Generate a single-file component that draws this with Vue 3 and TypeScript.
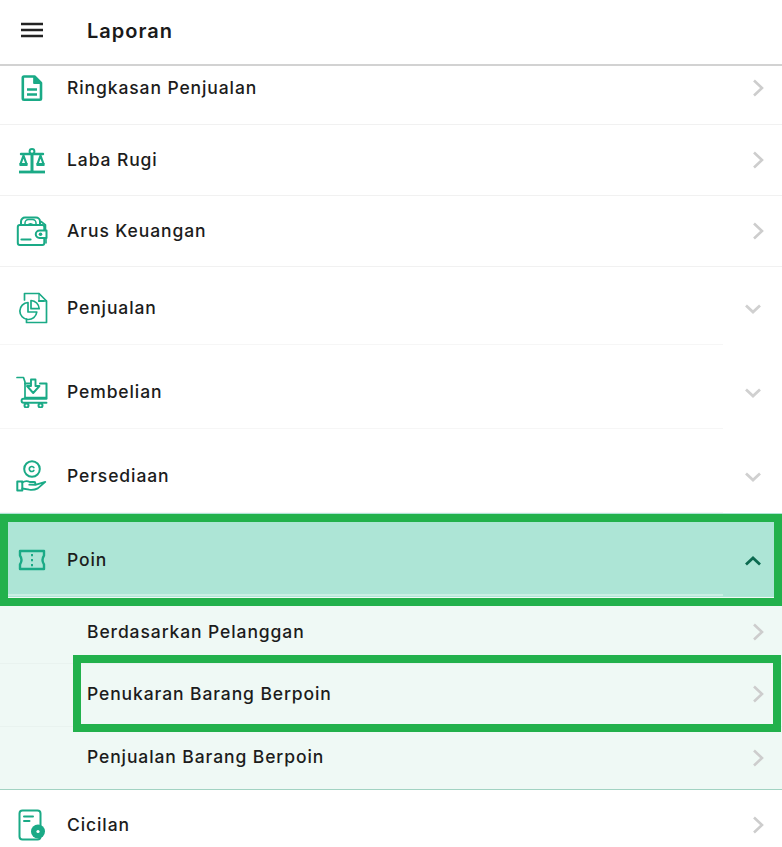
<script setup lang="ts">
type Kind = 'right' | 'down' | 'up'
interface Row { label: string; icon: string; kind: Kind; cls: string }

const topRows: Row[] = [
  { label: 'Ringkasan Penjualan', icon: 'doc', kind: 'right', cls: 'r1' },
  { label: 'Laba Rugi', icon: 'scale', kind: 'right', cls: 'r2' },
  { label: 'Arus Keuangan', icon: 'wallet', kind: 'right', cls: 'r2' },
  { label: 'Penjualan', icon: 'pie', kind: 'down', cls: 'r3' },
  { label: 'Pembelian', icon: 'cart', kind: 'down', cls: 'r4' },
  { label: 'Persediaan', icon: 'hand', kind: 'down', cls: 'r4' }
]
const subRows = [
  { label: 'Berdasarkan Pelanggan', cls: 's1', mark: false },
  { label: 'Penukaran Barang Berpoin', cls: 's2', mark: true },
  { label: 'Penjualan Barang Berpoin', cls: 's3', mark: false }
]
</script>

<template>
  <div class="page">
    <header class="bar">
      <svg class="menu" width="24" height="16" viewBox="0 0 24 16"><path d="M1 2h22M1 8h22M1 14h22" stroke="#222" stroke-width="2.4" fill="none" /></svg>
      <h1 class="title">Laporan</h1>
    </header>

    <div v-for="row in topRows" :key="row.label" class="row" :class="row.cls">
      <svg class="icon" width="32" height="32" viewBox="0 0 32 32" fill="none" stroke="#1aaa86" stroke-width="1.7" stroke-linejoin="round" stroke-linecap="round">
        <template v-if="row.icon === 'doc'">
          <path d="M8 4.500h10.500l6.500 6.500v15.500a1.200 1.200 0 0 1-1.200 1.200H8a1.200 1.200 0 0 1-1.200-1.200V5.700A1.200 1.200 0 0 1 8 4.500z" stroke-width="2.600" />
          <path d="M18 4.500l7 7h-7z" fill="#1aaa86" stroke-width="1" />
          <path d="M11 17.500h10M11 22.500h10" stroke-width="2.400" stroke-linecap="butt" />
        </template>
        <template v-else-if="row.icon === 'scale'">
          <path d="M3 28h26" stroke-width="2.800" stroke-linecap="butt" />
          <path d="M16 10v18" stroke-width="3" stroke-linecap="butt" />
          <circle cx="16" cy="7.500" r="2.400" stroke-width="2" />
          <path d="M5 10h22" stroke-width="2.400" />
          <path d="M7.500 11.500L4.500 20h6zM24.500 11.500L21.500 20h6z" stroke-width="2.200" />
          <path d="M3.500 20.500h8M20.500 20.500h8" stroke-width="3" stroke-linecap="butt" />
        </template>
        <template v-else-if="row.icon === 'wallet'">
          <rect x="1.800" y="10" width="26.500" height="20" rx="2" stroke-width="2" />
          <path d="M5 10V6.500a4 4 0 0 1 4-4h11a4 4 0 0 1 4 4V10" stroke-width="2" />
          <path d="M9 10V8a3.500 3.500 0 0 1 3.500-3.500h4A3.500 3.500 0 0 1 20 8v2M12 10a3 3 0 0 1 5 0" stroke-width="1.500" />
          <path d="M25 6.500l4.500 3.500v5M30 23v5" stroke-width="1.600" />
          <path d="M30.500 15.500h-7a3.500 3.500 0 0 0 0 7.500h7z" fill="#fff" stroke-width="2" />
          <circle cx="24.500" cy="19.200" r="1.800" fill="#1aaa86" stroke="none" />
          <path d="M5.500 24.500h9" stroke-width="2.200" />
        </template>
        <template v-else-if="row.icon === 'pie'">
          <path d="M8.500 8V1.500H23l7.500 7.500v21.500H10.500V27" stroke-width="1.700" />
          <path d="M23 1.500V9h7.500" stroke-width="1.300" />
          <path d="M23 9h4.500" stroke-width="2.200" />
          <path d="M15 8.500v8.200h8.200a8.600 8.600 0 0 0-8.200-8.200z" stroke-width="1.700" />
          <path d="M12 10.500a8.500 8.500 0 1 0 8.800 9.500h-8.800z" stroke-width="1.700" />
        </template>
        <template v-else-if="row.icon === 'cart'">
          <path d="M1 1.500h6.500L9 6v15" stroke-width="1.700" />
          <path d="M9 7.500h5M24 7.500h6.500V22" stroke-width="2" />
          <path d="M15 3.500h4.500v6.500h4L17.200 17l-6.200-7h4z" stroke-width="1.900" />
          <path d="M9 21.500h21" stroke-width="1.700" />
          <path d="M30.500 22.800H7.500a1.700 1.700 0 0 0 0 3.900h23" stroke-width="1.900" />
          <circle cx="10.500" cy="29.500" r="2" stroke-width="2" />
          <circle cx="24.500" cy="29.500" r="2" stroke-width="2" />
        </template>
        <template v-else-if="row.icon === 'hand'">
          <circle cx="16" cy="9" r="7.800" stroke-width="2" />
          <path d="M17.800 7.500a2.500 2.500 0 1 0 0 3" stroke-width="1.700" />
          <path d="M1.300 21.500h5v9h-5z" stroke-width="2" />
          <path d="M6.300 22.500c3-2 5-2 7.500-.5h4.500c1.500 0 1.500 2.700 0 2.700h-5l6 .2 10-3-7.500 6.500c-3 1.500-5 1.800-8.500 1.300l-7-1.200" stroke-width="1.800" />
        </template>
      </svg>
      <span class="label">{{ row.label }}</span>
      <svg v-if="row.kind === 'right'" class="chev-r" width="12" height="18" viewBox="0 0 12 18"><path d="M2 1.500L10 9l-8 7.500" fill="none" stroke="#cdcdcd" stroke-width="2.600" /></svg>
      <svg v-else class="chev-d" width="18" height="12" viewBox="0 0 18 12"><path d="M2 2.500l7 6.500 7-6.500" fill="none" stroke="#d0d0d0" stroke-width="2.800" /></svg>
    </div>

    <div class="row r4 poin">
      <svg class="icon" width="32" height="32" viewBox="0 0 32 32" fill="none" stroke="#1aaa86" stroke-width="2.400" stroke-linejoin="round">
        <path d="M4 7H28V11.500Q25 16 28 20.500V25H4V20.500Q7 16 4 11.500Z" />
        <path d="M16 10v2.200M16 15v2.200M16 20v2.200" stroke-width="2" />
      </svg>
      <span class="label">Poin</span>
      <svg class="chev-d" width="18" height="12" viewBox="0 0 18 12"><path d="M2 9.500L9 3l7 6.500" fill="none" stroke="#0c6a50" stroke-width="2.800" /></svg>
      <i class="mark mark-poin"></i>
    </div>

    <div class="sub">
      <div v-for="item in subRows" :key="item.label" class="sub-row" :class="item.cls">
        <span class="label">{{ item.label }}</span>
        <svg class="chev-r" width="12" height="18" viewBox="0 0 12 18"><path d="M2 1.500L10 9l-8 7.500" fill="none" stroke="#cdcdcd" stroke-width="2.600" /></svg>
        <i v-if="item.mark" class="mark mark-sub"></i>
      </div>
    </div>

    <div class="row r2 last">
      <svg class="icon" width="32" height="32" viewBox="0 0 32 32" fill="none" stroke="#1aaa86" stroke-width="2" stroke-linecap="round">
        <rect x="3.500" y="1.500" width="21" height="29" rx="3" />
        <path d="M8 7.500h9M8 12h5.500" stroke-width="2" />
        <circle cx="22" cy="22.500" r="7" fill="#1aaa86" stroke="none" />
        <circle cx="22" cy="22.500" r="1.600" fill="#fff" stroke="none" />
      </svg>
      <span class="label">Cicilan</span>
      <svg class="chev-r" width="12" height="18" viewBox="0 0 12 18"><path d="M2 1.500L10 9l-8 7.500" fill="none" stroke="#cdcdcd" stroke-width="2.600" /></svg>
    </div>
  </div>
</template>

<style scoped>
.page {
  width: 782px;
  height: 847px;
  overflow: hidden;
  background: #fff;
  font-family: Inter, "Noto Sans", sans-serif;
  color: #1c1c1c;
}
.bar {
  height: 66px;
  box-sizing: border-box;
  border-bottom: 2px solid #d2d2d2;
  display: flex;
  align-items: center;
  padding-left: 20px;
  padding-bottom: 4px;
}
.menu { flex: none; }
.title {
  margin: 2px 0 0 43px;
  font-size: 20px;
  font-weight: 600;
  letter-spacing: 1px;
  color: #1a1a1a;
}
.row {
  position: relative;
  display: flex;
  align-items: center;
  box-sizing: border-box;
  padding-left: 16px;
  padding-right: 18px;
  border-bottom: 1px solid #f1f1f1;
}
.icon { flex: none; margin-right: 19px; }
.label {
  font-size: 17.5px;
  font-weight: 500;
  letter-spacing: 0.9px;
  flex: 1;
}
.row .label { margin-bottom: 2px; }
.chev-r { flex: none; }
.chev-d { flex: none; margin: 2px 2px 0 0; }
.r1 { height: 59px; padding-bottom: 14px; }
.r2 { height: 71px; }
.r3 { height: 78px; padding-top: 4px; border-bottom: none; background: linear-gradient(#f6f6f6, #f6f6f6) left bottom / 723px 1px no-repeat; }
.r4 { height: 84px; padding-top: 10px; border-bottom: none; background: linear-gradient(#f6f6f6, #f6f6f6) left bottom / 723px 1px no-repeat; }
.poin {
  background: #ade5d6 linear-gradient(#c9efe4, #c9efe4) left bottom 1px / 723px 2px no-repeat;
}
.mark {
  position: absolute;
  box-sizing: border-box;
  border: 8px solid #22b14c;
  pointer-events: none;
}
.mark-poin { left: 0; right: 0; top: 1px; height: 92px; }
.sub {
  background: #eff9f5;
  border-bottom: 1px solid #a2d3c2;
}
.sub-row {
  position: relative;
  display: flex;
  align-items: center;
  box-sizing: border-box;
  padding-left: 87px;
  padding-right: 18px;
  border-bottom: 1px solid #e9f3ef;
}
.s1 { height: 67px; padding-top: 3px; }
.s2 { height: 63px; padding-bottom: 3px; }
.s3 { height: 62px; border-bottom: none; }
.s3 .label { margin-bottom: 3px; }
.mark-sub { left: 73px; right: 1px; top: -9px; height: 77px; }
</style>
